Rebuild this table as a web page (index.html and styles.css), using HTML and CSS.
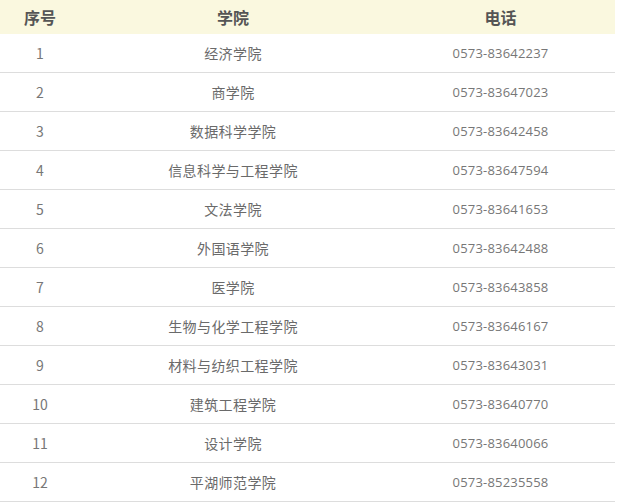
FILE: index.html
```html
<!DOCTYPE html>
<html lang="zh-CN">
<head>
<meta charset="utf-8">
<link rel="stylesheet" href="styles.css">
</head>
<body>
<table class="list">
  <thead>
    <tr><th class="c1">序号</th><th class="c2">学院</th><th class="c3">电话</th></tr>
  </thead>
  <tbody>
    <tr><td class="num">1</td><td class="name">经济学院</td><td class="tel">0573-83642237</td></tr>
    <tr><td class="num">2</td><td class="name">商学院</td><td class="tel">0573-83647023</td></tr>
    <tr><td class="num">3</td><td class="name">数据科学学院</td><td class="tel">0573-83642458</td></tr>
    <tr><td class="num">4</td><td class="name">信息科学与工程学院</td><td class="tel">0573-83647594</td></tr>
    <tr><td class="num">5</td><td class="name">文法学院</td><td class="tel">0573-83641653</td></tr>
    <tr><td class="num">6</td><td class="name">外国语学院</td><td class="tel">0573-83642488</td></tr>
    <tr><td class="num">7</td><td class="name">医学院</td><td class="tel">0573-83643858</td></tr>
    <tr><td class="num">8</td><td class="name">生物与化学工程学院</td><td class="tel">0573-83646167</td></tr>
    <tr><td class="num">9</td><td class="name">材料与纺织工程学院</td><td class="tel">0573-83643031</td></tr>
    <tr><td class="num">10</td><td class="name">建筑工程学院</td><td class="tel">0573-83640770</td></tr>
    <tr><td class="num">11</td><td class="name">设计学院</td><td class="tel">0573-83640066</td></tr>
    <tr><td class="num">12</td><td class="name">平湖师范学院</td><td class="tel">0573-85235558</td></tr>
  </tbody>
</table>
</body>
</html>
```
FILE: styles.css
```css
html, body {
  margin: 0;
  padding: 0;
  background: #fff;
}
body {
  font-family: "Noto Sans CJK SC", "Noto Sans", sans-serif;
}
.list {
  width: 615px;
  border-collapse: collapse;
  table-layout: fixed;
}
.list th {
  height: 34px;
  padding: 0;
  background: #faf8df;
  color: #555;
  font-size: 16px;
  font-weight: bold;
  text-align: center;
}
.c1 { width: 80px; }
.c2 { width: 306px; }
.c3 { width: 229px; }
.list td {
  height: 37px;
  padding: 0 0 1px 0;
  border-bottom: 1px solid #dddddd;
  color: #666;
  font-size: 13px;
  text-align: center;
}
.list td.name {
  font-size: 14px;
  letter-spacing: 0.4px;
  color: #6a6a6a;
}
.list td.num {
  font-size: 14px;
  color: #777;
}
.list td.tel {
  font-family: "Open Sans", "Noto Sans", sans-serif;
  font-size: 13px;
  color: #777;
  letter-spacing: 0.2px;
}
```
